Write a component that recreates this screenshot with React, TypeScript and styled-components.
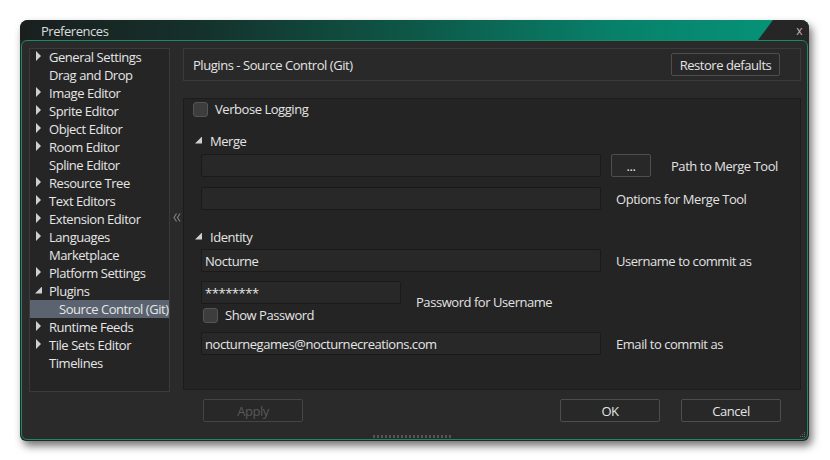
import React from 'react'
import styled, { createGlobalStyle } from 'styled-components'

const Global = createGlobalStyle`
  html, body {
    margin: 0;
    background: #ffffff;
  }
  body {
    font-family: "Open Sans", "DejaVu Sans", sans-serif;
    font-size: 13px;
    letter-spacing: -0.45px;
    color: #e4e4e4;
  }
`

const Page = styled.div`
  padding: 20px 0 0 20px;
  width: 830px;
  height: 460px;
  box-sizing: border-box;
`

const Window = styled.div`
  position: relative;
  width: 789px;
  height: 421px;
  display: flex;
  flex-direction: column;
  background: #262626;
  border-radius: 8px 8px 6px 6px;
  box-shadow: 3px 5px 9px rgba(0, 0, 0, 0.55);
  overflow: hidden;
`

const TitleBar = styled.div`
  height: 20px;
  display: flex;
  align-items: stretch;
  background: linear-gradient(90deg, #1a1f1e 0%, #15302b 22%, #0e5545 48%, #08806a 75%, #05977a 100%);
`

const Title = styled.div`
  flex: 1;
  padding-left: 21px;
  line-height: 22px;
  font-size: 13px;
  color: #dcdcdc;
`

const CloseTab = styled.div`
  width: 51px;
  background: #262626;
  clip-path: polygon(15px 0, 100% 0, 100% 100%, 0 100%);
  display: flex;
  justify-content: flex-end;
  align-items: center;
  padding-right: 7px;
  box-sizing: border-box;
  font-size: 12px;
  color: #b8b8b8;
`

const Body = styled.div`
  flex: 1;
  margin: 0 1px 1px 1px;
  border: 1px solid #1a8a68;
  border-radius: 6px;
  background: #2a2a2a;
  display: flex;
  flex-direction: column;
  padding: 7px 6px 0 7px;
`

const Columns = styled.div`
  display: flex;
  align-items: flex-start;
`

const Tree = styled.div`
  width: 141px;
  height: 344px;
  box-sizing: border-box;
  border: 1px solid #3b3b3b;
  background: #252525;
  padding-top: 0;
  & > div:first-child {
    margin-top: -1px;
  }
`

const TreeRow = styled.div<{ $depth: number; $selected?: boolean }>`
  height: 18px;
  display: flex;
  align-items: center;
  padding-left: ${(p) => 6 + p.$depth * 10}px;
  background: ${(p) => (p.$selected ? '#5b6370' : 'transparent')};
  color: #e6e6e6;
  white-space: nowrap;
  overflow: hidden;
`

const ArrowSlot = styled.span`
  width: 13px;
  flex: none;
  display: flex;
  align-items: center;
`

const ArrowRight = styled.span`
  width: 0;
  height: 0;
  border-left: 5px solid #cfcfcf;
  border-top: 5px solid transparent;
  border-bottom: 5px solid transparent;
  margin-top: -2px;
`

const ArrowOpen = styled.span`
  width: 7px;
  height: 7px;
  background: #cfcfcf;
  clip-path: polygon(100% 0, 100% 100%, 0 100%);
  margin-left: -1px;
  margin-top: -2px;
`

const Handle = styled.div`
  width: 13px;
  height: 344px;
  display: flex;
  align-items: center;
  justify-content: center;
  padding-bottom: 5px;
  box-sizing: border-box;
`

const Right = styled.div`
  width: 618px;
  display: flex;
  flex-direction: column;
`

const HeaderBox = styled.div`
  height: 33px;
  box-sizing: border-box;
  border: 1px solid #3a3a3a;
  background: #292929;
  display: flex;
  align-items: center;
  justify-content: space-between;
  padding: 0 20px 0 9px;
`

const Button = styled.button<{ $width: number }>`
  width: ${(p) => p.$width}px;
  height: 23px;
  box-sizing: border-box;
  border: 1px solid #4e4e4e;
  border-radius: 2px;
  background: #282828;
  color: #e4e4e4;
  font-family: inherit;
  font-size: 13px;
  letter-spacing: inherit;
  padding: 0;
  &:disabled {
    color: #585858;
    border-color: #454545;
  }
`

const MainBox = styled.div`
  margin-top: 17px;
  height: 292px;
  box-sizing: border-box;
  border: 1px solid #1c1c1c;
  background: #242424;
  display: flex;
  flex-direction: column;
`

const CheckRow = styled.label<{ $indent: number; $top: number }>`
  display: flex;
  align-items: center;
  gap: 7px;
  margin-left: ${(p) => p.$indent}px;
  margin-top: ${(p) => p.$top}px;
  height: 16px;
`

const Checkbox = styled.span`
  width: 15px;
  height: 15px;
  box-sizing: border-box;
  border: 1px solid #555555;
  border-radius: 3px;
  background: #3d3d3d;
`

const Section = styled.div<{ $top: number }>`
  display: flex;
  align-items: center;
  gap: 8px;
  margin-left: 12px;
  margin-top: ${(p) => p.$top}px;
  height: 18px;
`

const FieldRow = styled.div<{ $top: number }>`
  display: flex;
  align-items: center;
  margin-left: 17px;
  margin-top: ${(p) => p.$top}px;
`

const Input = styled.div<{ $width: number }>`
  width: ${(p) => p.$width}px;
  height: 23px;
  box-sizing: border-box;
  border: 1px solid #1a1a1a;
  border-radius: 2px;
  background: #282828;
  padding-left: 3px;
  display: flex;
  align-items: center;
  color: #e6e6e6;
`

const FieldLabel = styled.span<{ $gap: number }>`
  margin-left: ${(p) => p.$gap}px;
  color: #e2e2e2;
`

const PasswordCol = styled.div`
  display: flex;
  flex-direction: column;
`

const Footer = styled.div`
  margin-top: 9px;
  display: flex;
  justify-content: space-between;
  padding: 0 20px 0 20px;
`

const FooterGroup = styled.div`
  display: flex;
  gap: 21px;
`

const Grip = styled.div`
  align-self: center;
  margin: 13px 0 0 -6px;
  width: 78px;
  height: 3px;
  background-image: repeating-linear-gradient(90deg, #555 0 2px, transparent 2px 4px);
`

const Corner = styled.svg`
  position: absolute;
  right: 3px;
  bottom: 3px;
`

const treeItems: { label: string; arrow?: 'right' | 'open'; depth?: number; selected?: boolean }[] = [
  { label: 'General Settings', arrow: 'right' },
  { label: 'Drag and Drop' },
  { label: 'Image Editor', arrow: 'right' },
  { label: 'Sprite Editor', arrow: 'right' },
  { label: 'Object Editor', arrow: 'right' },
  { label: 'Room Editor', arrow: 'right' },
  { label: 'Spline Editor' },
  { label: 'Resource Tree', arrow: 'right' },
  { label: 'Text Editors', arrow: 'right' },
  { label: 'Extension Editor', arrow: 'right' },
  { label: 'Languages', arrow: 'right' },
  { label: 'Marketplace' },
  { label: 'Platform Settings', arrow: 'right' },
  { label: 'Plugins', arrow: 'open' },
  { label: 'Source Control (Git)', depth: 1, selected: true },
  { label: 'Runtime Feeds', arrow: 'right' },
  { label: 'Tile Sets Editor', arrow: 'right' },
  { label: 'Timelines' },
]

export default function App() {
  return (
    <>
      <Global />
      <Page>
        <Window>
          <TitleBar>
            <Title>Preferences</Title>
            <CloseTab>x</CloseTab>
          </TitleBar>
          <Body>
            <Columns>
              <Tree>
                {treeItems.map((it) => (
                  <TreeRow key={it.label} $depth={it.depth || 0} $selected={it.selected}>
                    <ArrowSlot>
                      {it.arrow === 'right' && <ArrowRight />}
                      {it.arrow === 'open' && <ArrowOpen />}
                    </ArrowSlot>
                    {it.label}
                  </TreeRow>
                ))}
              </Tree>
              <Handle>
                <svg width="8" height="9" viewBox="0 0 8 9">
                  <path d="M3.5 0.5 L1 4.5 L3.5 8.5 M7 0.5 L4.5 4.5 L7 8.5" fill="none" stroke="#7c7c7c" strokeWidth="1.2" />
                </svg>
              </Handle>
              <Right>
                <HeaderBox>
                  <span>Plugins - Source Control (Git)</span>
                  <Button $width={109}>Restore defaults</Button>
                </HeaderBox>
                <MainBox>
                  <CheckRow $indent={9} $top={2}>
                    <Checkbox />
                    Verbose Logging
                  </CheckRow>
                  <Section $top={15}>
                    <ArrowOpen />
                    Merge
                  </Section>
                  <FieldRow $top={4}>
                    <Input $width={400} />
                    <Button $width={40} style={{ marginLeft: 10 }}>...</Button>
                    <FieldLabel $gap={20}>Path to Merge Tool</FieldLabel>
                  </FieldRow>
                  <FieldRow $top={10}>
                    <Input $width={400} />
                    <FieldLabel $gap={15}>Options for Merge Tool</FieldLabel>
                  </FieldRow>
                  <Section $top={18}>
                    <ArrowOpen />
                    Identity
                  </Section>
                  <FieldRow $top={3}>
                    <Input $width={400}>Nocturne</Input>
                    <FieldLabel $gap={15}>Username to commit as</FieldLabel>
                  </FieldRow>
                  <FieldRow $top={9}>
                    <PasswordCol>
                      <Input $width={200}>********</Input>
                      <CheckRow $indent={2} $top={3}>
                        <Checkbox />
                        Show Password
                      </CheckRow>
                    </PasswordCol>
                    <FieldLabel $gap={15}>Password for Username</FieldLabel>
                  </FieldRow>
                  <FieldRow $top={9}>
                    <Input $width={400}>nocturnegames@nocturnecreations.com</Input>
                    <FieldLabel $gap={15}>Email to commit as</FieldLabel>
                  </FieldRow>
                </MainBox>
                <Footer>
                  <Button $width={100} disabled>
                    Apply
                  </Button>
                  <FooterGroup>
                    <Button $width={100}>OK</Button>
                    <Button $width={100}>Cancel</Button>
                  </FooterGroup>
                </Footer>
              </Right>
            </Columns>
            <Grip />
          </Body>
          <Corner width="7" height="7" viewBox="0 0 7 7">
            <rect x="5" y="1" width="1" height="1" fill="#666" />
            <rect x="3" y="3" width="1" height="1" fill="#666" />
            <rect x="5" y="3" width="1" height="1" fill="#666" />
            <rect x="1" y="5" width="1" height="1" fill="#666" />
            <rect x="3" y="5" width="1" height="1" fill="#666" />
            <rect x="5" y="5" width="1" height="1" fill="#666" />
          </Corner>
        </Window>
      </Page>
    </>
  )
}
